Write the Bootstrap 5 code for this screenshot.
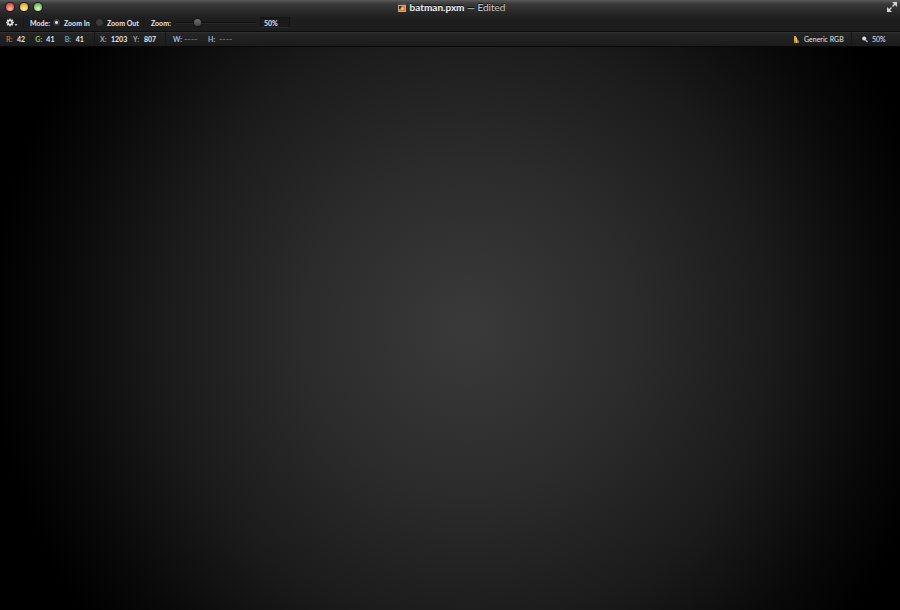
<!DOCTYPE html>
<html lang="en">
<head>
<meta charset="utf-8">
<meta name="viewport" content="width=device-width, initial-scale=1">
<title>batman.pxm — Edited</title>
<link href="https://cdn.jsdelivr.net/npm/bootstrap@5.3.0/dist/css/bootstrap.min.css" rel="stylesheet">
<style>
body { background: #000; color: #e6e6e6; font: 700 7px/14px Lato, sans-serif; }
svg { display: block; flex: none; }
button { padding: 0; border: 0; background: none; color: inherit; }
.chrome { background: linear-gradient(#5c5c5c 0, #484848 2px, #393939 4px, #252525 14px, #1d1d1d 20px, #1e1e1e 100%); }
.titlebar { height: 14px; padding: 0 3px 0 6px; display: grid; grid-template-columns: 1fr auto 1fr; align-items: center; }
.light { width: 8px; height: 8px; border-radius: 50%; box-shadow: 0 0 1px 1px #191919; }
.light-close { background: radial-gradient(circle at 50% 75%, #ffc3b4, #ee6a62 50%, #b53a38); }
.light-min { background: radial-gradient(circle at 50% 75%, #fff0b3, #f3bf55 50%, #b8842f); }
.light-max { background: radial-gradient(circle at 50% 75%, #e2fabb, #90d077 50%, #4c9645); }
.lights { gap: 6px; }
.doc-name { font-size: 10px; line-height: 14px; color: #f2f2f2; text-shadow: 0 -1px 0 #000; }
.doc-state { font-weight: 400; color: #cfcfcf; }
.tools { height: 17px; padding-left: 6px; }
.gear { width: 18px; border-right: 1px solid #191919; height: 12px; }
.modes { padding-left: 6px; width: 120px; border-right: 1px solid #191919; height: 12px; }
.mode-title { width: 23px; }
.mode-in { width: 43px; }
.mode-dot { appearance: none; width: 7px; height: 7px; margin: 0 4px 0 0; border-radius: 50%; background: #3b3b3b; box-shadow: 0 0 1px #000; flex: none; }
.mode-dot:checked { background: radial-gradient(circle, #ddd 0 1px, #3b3b3b 2px); }
.zoom-label { width: 25px; margin-left: 7px; }
.zoom-range { appearance: none; width: 80px; height: 8px; margin: 0; background: linear-gradient(#0000 3px, #101010 3px 4px, #2a2a2a 4px 5px, #0000 5px); }
.zoom-range::-webkit-slider-thumb { appearance: none; width: 7px; height: 7px; border-radius: 50%; background: linear-gradient(#707070, #444); box-shadow: 0 0 1px 1px #151515; }
.zoom-value { width: 30px; height: 11px; margin-left: 4px; padding: 0 3px; border: 1px solid #141414; border-bottom-color: #2a2a2a; border-radius: 0; background: #1a1a1a; color: inherit; font: inherit; line-height: 9px; }
.status { height: 16px; border-top: 1px solid #0c0c0c; border-bottom: 1px solid #080808; background: linear-gradient(#303030 0 1px, #252525 1px, #1b1b1b); }
.group { height: 14px; border-right: 1px solid #171717; }
.group-rgb { width: 95px; padding-left: 6px; }
.group-pos { width: 71px; padding-left: 5px; }
.group-size { padding-left: 7px; border: 0; }
.reading { width: 30px; }
.reading dt { width: 11px; font-weight: 700; }
.reading-x { width: 33px; }
.reading-size { width: 35px; }
.red { color: #d9602f; }
.green { color: #8fc65a; }
.blue { color: #58a5df; }
.grey { color: #a3a3a3; }
.steel { color: #a3b9d8; }
.empty { color: #666; font-size: 9px; }
.profile { width: 58px; gap: 5px; }
.magnify { width: 38px; gap: 4px; padding-left: 10px; box-sizing: content-box; }
.canvas { background: radial-gradient(circle 480px at 52% 50%, #3a3a3a, #2b2b2b 35%, #1b1b1b 63%, #090909 86%, #000); }
</style>
<script src="https://cdn.jsdelivr.net/npm/bootstrap@5.3.0/dist/js/bootstrap.bundle.min.js" defer></script>
</head>
<body class="d-flex flex-column min-vh-100">
<header class="chrome">
  <div class="titlebar">
    <div class="lights d-flex">
      <button class="light light-close" aria-label="Close"></button>
      <button class="light light-min" aria-label="Minimize"></button>
      <button class="light light-max" aria-label="Zoom window"></button>
    </div>
    <div class="d-flex align-items-center gap-1">
      <svg width="8" height="9" viewBox="0 0 8 9"><path d="M0 0h6l2 2v7H0z" fill="#b5aa9b"/><path d="M0 0h6l2 2H0z" fill="#4a4540"/><path d="M1 3h6v5H1z" fill="#d47b36"/><path d="M1 3h3L2 6H1z" fill="#342d2a"/><path d="M4 4l2 1-1 2H3z" fill="#ffc17a"/></svg>
      <h1 class="doc-name fw-bold m-0">batman.pxm <span class="doc-state">— Edited</span></h1>
    </div>
    <button class="ms-auto" aria-label="Enter full screen">
      <svg width="10" height="10" viewBox="0 0 10 10"><path d="M5 0h5v5L8 3 6 5 5 4l2-2zM5 10H0V5l2 2 2-2 1 1-2 2z" fill="#d4d4d4"/></svg>
    </button>
  </div>
  <div class="tools d-flex align-items-center">
    <button class="gear d-flex align-items-center" aria-label="Tool options">
      <svg width="12" height="9" viewBox="0 0 12 9"><circle cx="4" cy="4.5" r="2.1" fill="none" stroke="#e2e2e2" stroke-width="1.6"/><path d="M4 .5v1.5M4 7v1.5M0 4.5h1.5M6.500 4.500H8M1.200 1.700l1 1M5.800 6.300l1 1M1.200 7.300l1-1M5.800 2.700l1-1" stroke="#e2e2e2" stroke-width="1.300"/><path d="M8.500 6h3L10 8z" fill="#ccc"/></svg>
    </button>
    <div class="modes d-flex align-items-center" role="radiogroup" aria-labelledby="mode-title">
      <span class="mode-title" id="mode-title">Mode:</span>
      <label class="mode-in d-flex align-items-center text-nowrap"><input class="mode-dot" type="radio" name="mode" checked>Zoom In</label>
      <label class="d-flex align-items-center text-nowrap"><input class="mode-dot" type="radio" name="mode">Zoom Out</label>
    </div>
    <label class="zoom-label" for="zoom">Zoom:</label>
    <input class="zoom-range" id="zoom" type="range" min="0" max="100" value="24">
    <input class="zoom-value" type="text" value="50%" aria-label="Zoom value">
  </div>
</header>
<section class="status d-flex justify-content-between" aria-label="Document information">
  <div class="d-flex">
    <dl class="group group-rgb d-flex m-0">
      <div class="reading d-flex"><dt class="red">R:</dt><dd class="m-0">42</dd></div>
      <div class="reading d-flex"><dt class="green">G:</dt><dd class="m-0">41</dd></div>
      <div class="reading d-flex"><dt class="blue">B:</dt><dd class="m-0">41</dd></div>
    </dl>
    <dl class="group group-pos d-flex m-0">
      <div class="reading reading-x d-flex"><dt class="grey">X:</dt><dd class="m-0">1203</dd></div>
      <div class="reading d-flex"><dt class="grey">Y:</dt><dd class="m-0">807</dd></div>
    </dl>
    <dl class="group group-size d-flex m-0">
      <div class="reading reading-size d-flex"><dt class="steel">W:</dt><dd class="empty m-0">----</dd></div>
      <div class="reading reading-size d-flex"><dt class="steel">H:</dt><dd class="empty m-0">----</dd></div>
    </dl>
  </div>
  <div class="d-flex">
    <button class="group profile d-flex align-items-center text-nowrap">
      <svg width="5" height="7" viewBox="0 0 5 7"><path d="M0 0h2v7H0z" fill="#d8a334"/><path d="M2 1l1 1v5H2z" fill="#e6ca75"/><path d="M3 3l2 2v2H3z" fill="#bd6247"/><path d="M0 5h2v2H0z" fill="#83994c"/></svg>
      Generic RGB
    </button>
    <button class="magnify d-flex align-items-center">
      <svg width="6" height="7" viewBox="0 0 6 7"><circle cx="2.200" cy="2.500" r="2" fill="#ddd"/><path d="M3 3.500l2.500 2.500" stroke="#bbb" stroke-width="1.200"/></svg>
      50%
    </button>
  </div>
</section>
<main class="canvas flex-grow-1" aria-label="Image canvas"></main>
</body>
</html>
